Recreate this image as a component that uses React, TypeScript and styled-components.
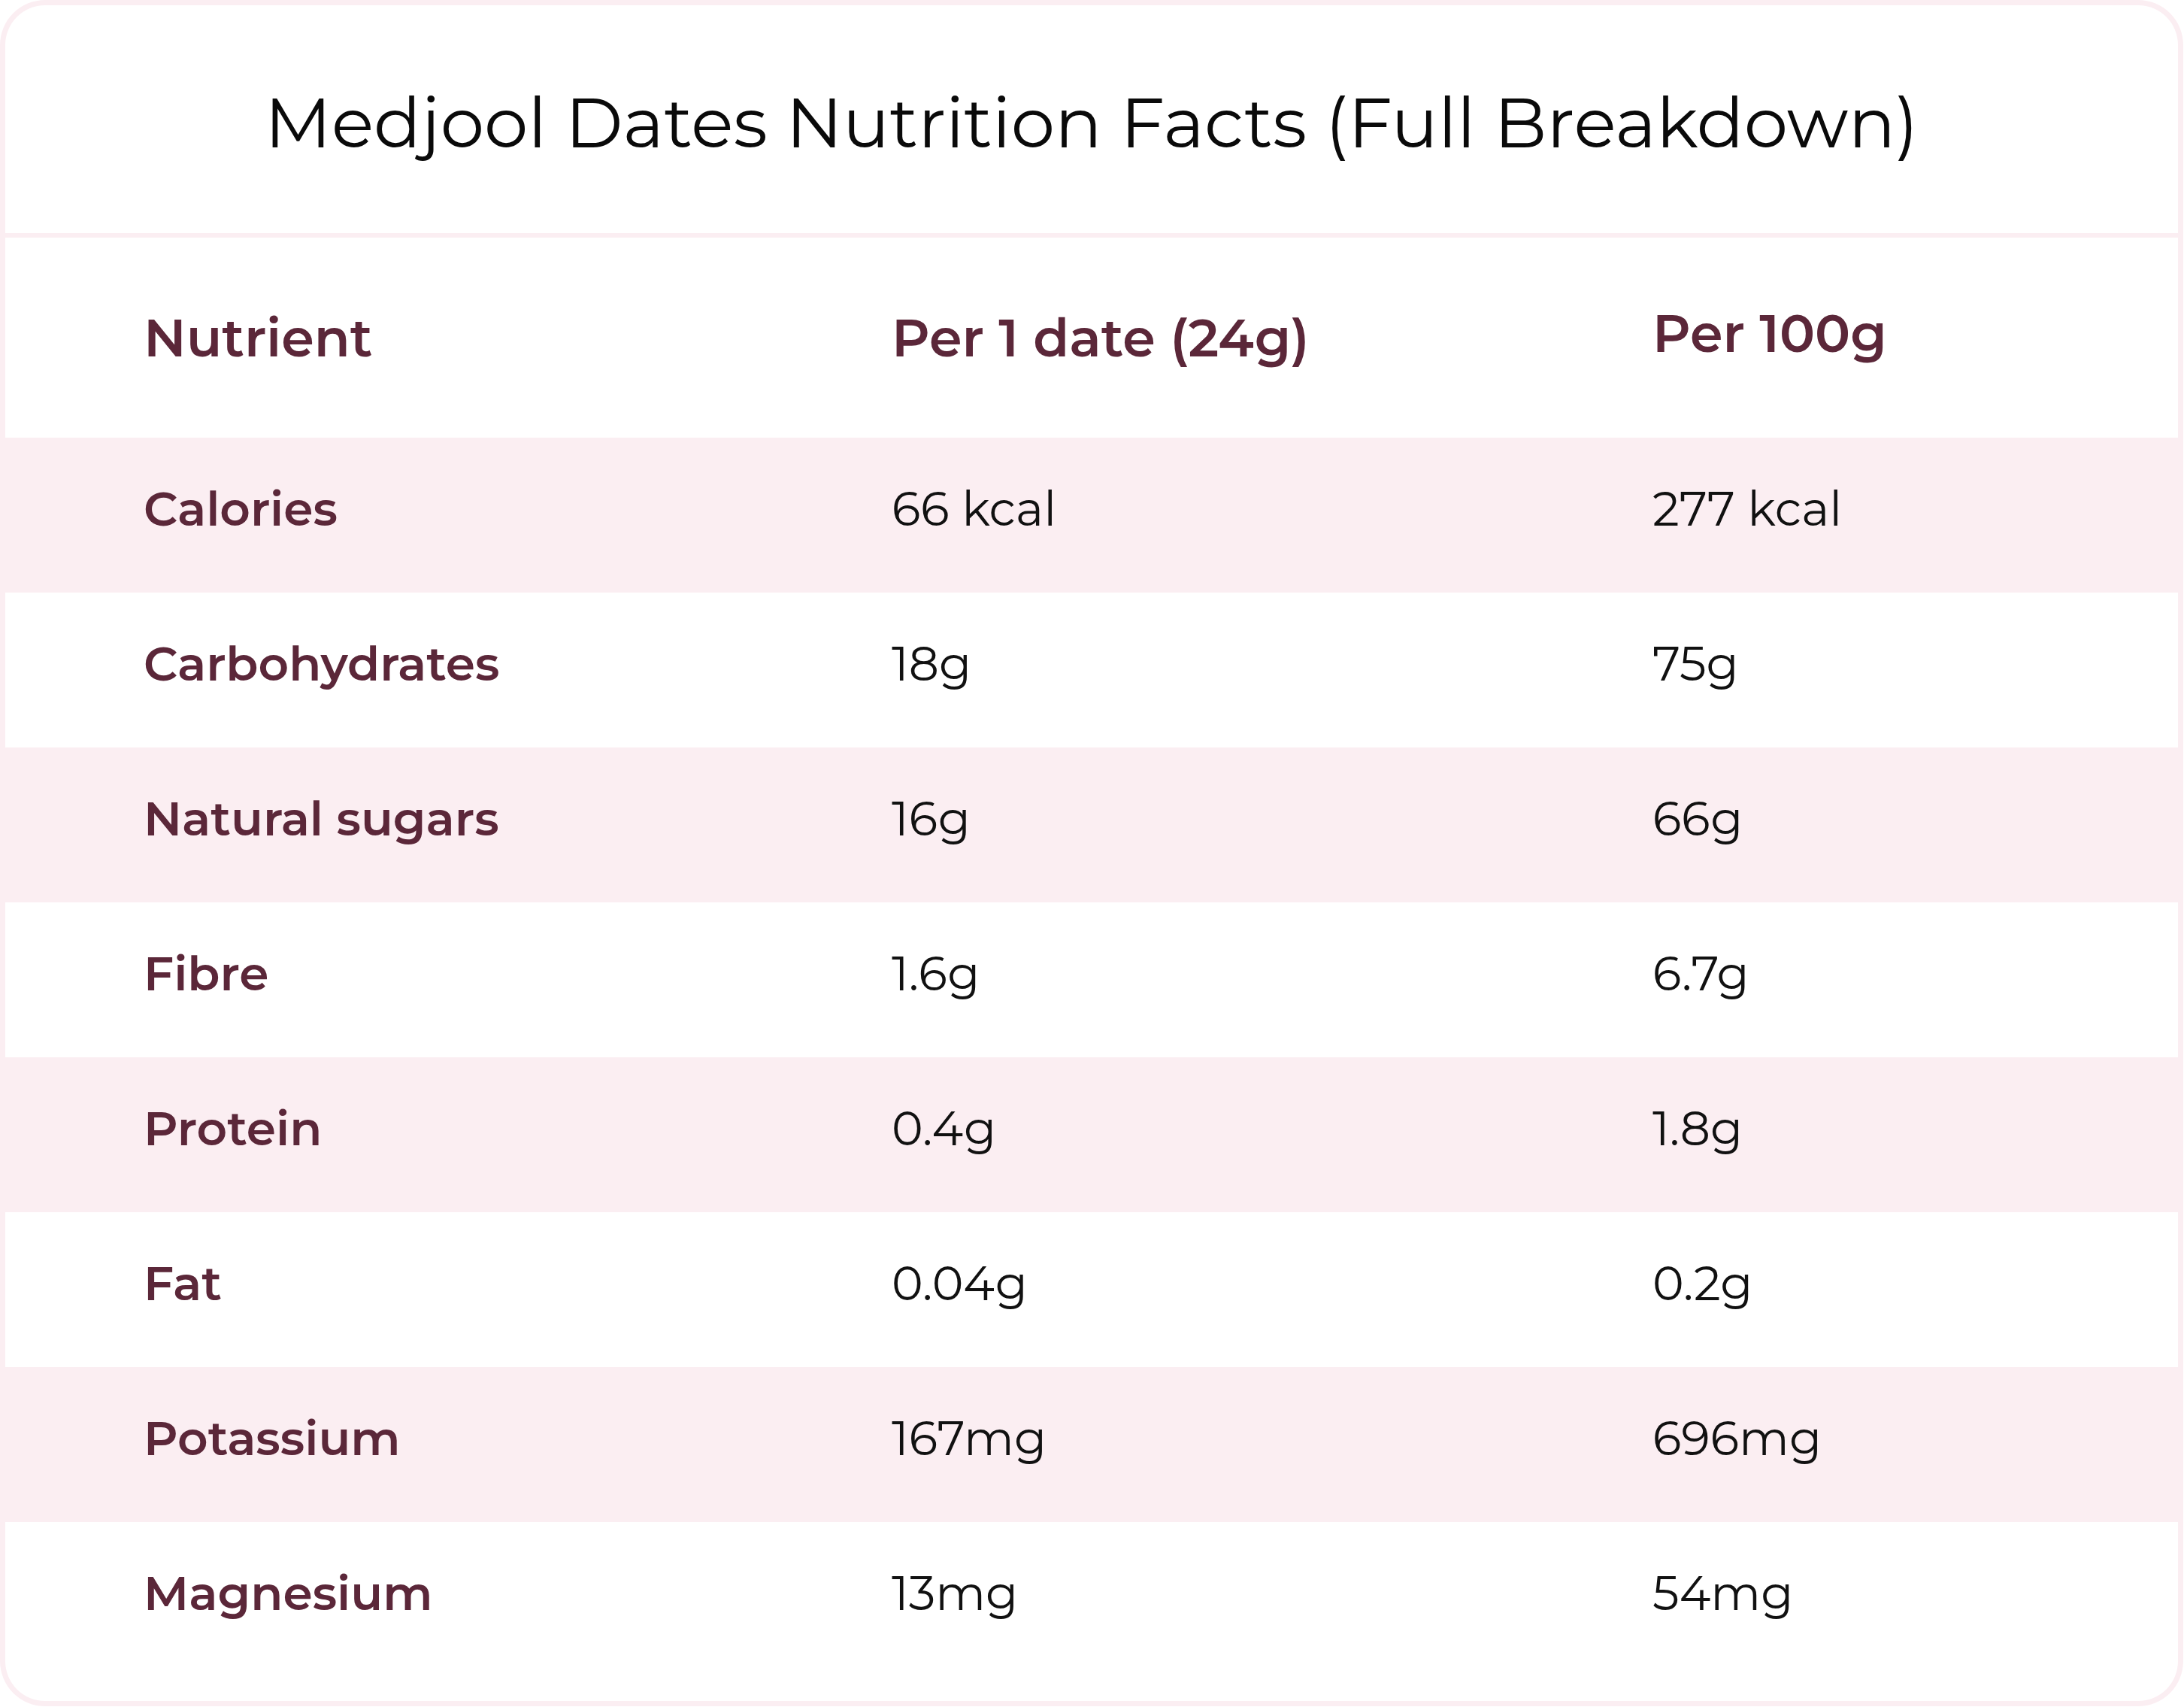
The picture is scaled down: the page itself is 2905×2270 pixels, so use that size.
import React from "react";
import styled, { createGlobalStyle } from "styled-components";

const GlobalStyle = createGlobalStyle`
  body {
    margin: 0;
    background: #ffffff;
  }
`;

const Card = styled.div`
  width: 2904px;
  box-sizing: border-box;
  padding: 7px;
  background: #fbeef2;
  border-radius: 60px;
  font-family: Montserrat, "Open Sans", "Noto Sans", sans-serif;
`;

const Sheet = styled.div`
  background: #ffffff;
  border-radius: 53px;
  overflow: hidden;
  padding-bottom: 32px;
`;

const TitleBar = styled.div`
  height: 309px;
  box-sizing: border-box;
  padding-top: 8px;
  display: flex;
  align-items: center;
  justify-content: center;
  border-bottom: 6px solid #fbeef2;
`;

const Title = styled.h1`
  margin: 0;
  font-size: 93px;
  font-weight: 400;
  color: #0a0a0a;
`;

const Row = styled.div<{ $shaded?: boolean; $head?: boolean }>`
  display: grid;
  grid-template-columns: 995px 1012px 1fr;
  align-items: center;
  box-sizing: border-box;
  height: ${(props) => (props.$head ? "266px" : "206px")};
  padding-bottom: ${(props) => (props.$head ? "0" : "16px")};
  background: ${(props) => (props.$shaded ? "#fbeef2" : "transparent")};
`;

const HeadCell = styled.div<{ $lift?: boolean }>`
  padding-left: 184px;
  font-size: 70px;
  font-weight: 600;
  line-height: 1.2;
  color: #5b2739;
  margin-bottom: ${(props) => (props.$lift ? "12px" : "0")};
`;

const Label = styled.div`
  padding-left: 184px;
  font-size: 63px;
  font-weight: 600;
  line-height: 1.2;
  color: #5b2739;
`;

const Value = styled.div`
  padding-left: 184px;
  font-size: 63px;
  font-weight: 400;
  line-height: 1.2;
  color: #111111;
`;

const rows = [
  ["Calories", "66 kcal", "277 kcal"],
  ["Carbohydrates", "18g", "75g"],
  ["Natural sugars", "16g", "66g"],
  ["Fibre", "1.6g", "6.7g"],
  ["Protein", "0.4g", "1.8g"],
  ["Fat", "0.04g", "0.2g"],
  ["Potassium", "167mg", "696mg"],
  ["Magnesium", "13mg", "54mg"],
];

function App() {
  return (
    <>
      <GlobalStyle />
      <Card>
        <Sheet>
          <TitleBar>
            <Title>Medjool Dates Nutrition Facts (Full Breakdown)</Title>
          </TitleBar>
          <Row $head>
            <HeadCell>Nutrient</HeadCell>
            <HeadCell>Per 1 date (24g)</HeadCell>
            <HeadCell $lift>Per 100g</HeadCell>
          </Row>
          {rows.map((r, i) => (
            <Row key={r[0]} $shaded={i % 2 === 0}>
              <Label>{r[0]}</Label>
              <Value>{r[1]}</Value>
              <Value>{r[2]}</Value>
            </Row>
          ))}
        </Sheet>
      </Card>
    </>
  );
}

export default App;
